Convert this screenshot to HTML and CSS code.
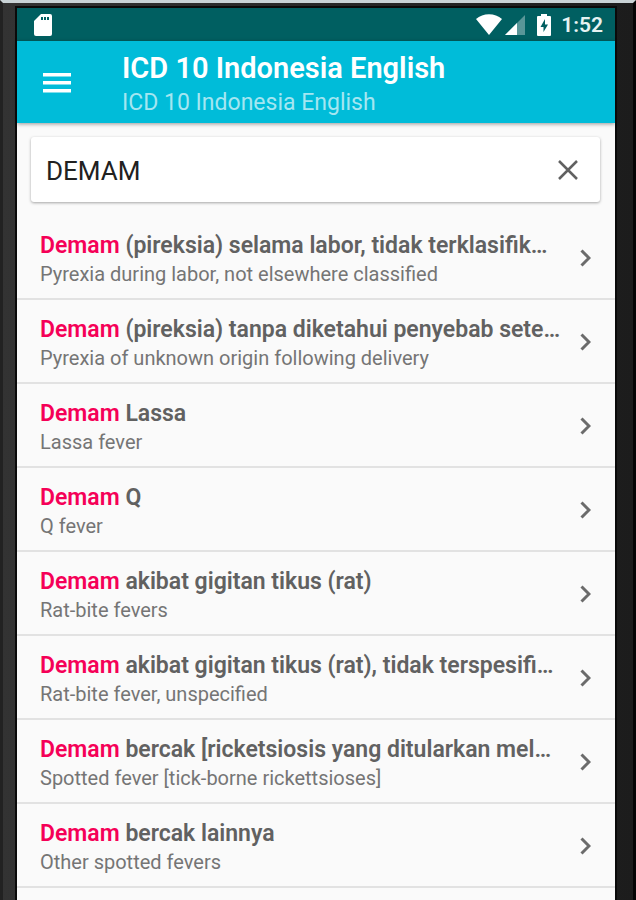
FILE: index.html
```html
<!DOCTYPE html>
<html lang="id">
<head>
    <meta charset="UTF-8">
    <meta name="viewport" content="width=device-width, initial-scale=1.0">
    <title>ICD 10 Indonesia English</title>
    <link rel="stylesheet" href="styles.css">
</head>
<body>

    <div class="phone">
        <div class="screen">
            <!-- Status bar -->
            <div class="status-bar">
                <svg class="sd-icon" viewBox="0 0 18 22" width="18" height="22">
                    <path fill="#fff" d="M7 0h9a2 2 0 0 1 2 2v18a2 2 0 0 1-2 2H2a2 2 0 0 1-2-2V7z"/>
                    <path fill="#005f61" d="M7 3h2v3H7zM10 3h2v3h-2zM13 3h2v3h-2z"/>
                </svg>
                <div class="status-icons">
                    <svg viewBox="0 0 26 21" width="26" height="21">
                        <path fill="#fff" d="M13 21 0 5C7-1.500 19-1.500 26 5z"/>
                    </svg>
                    <svg class="signal-icon" viewBox="0 0 20 20" width="20" height="20">
                        <path fill="#fff" fill-opacity=".35" d="M20 0v20H0z"/>
                        <path fill="#fff" d="M12 8v12H0z"/>
                    </svg>
                    <svg class="battery-icon" viewBox="0 0 14 22" width="14" height="22">
                        <path fill="#fff" d="M4 0h6v2h3a1 1 0 0 1 1 1v18a1 1 0 0 1-1 1H1a1 1 0 0 1-1-1V3a1 1 0 0 1 1-1h3z"/>
                        <path fill="#005f61" d="M8 5 3.500 13H6.500v5L11 10.500H8z"/>
                    </svg>
                    <span class="clock">1:52</span>
                </div>
            </div>

            <!-- App bar -->
            <header class="app-bar">
                <button class="menu-button" aria-label="Menu">
                    <svg viewBox="0 0 28 20" width="28" height="20">
                        <path fill="#fff" d="M0 0h28v3.500H0zM0 8h28v3.500H0zM0 16h28v3.500H0z"/>
                    </svg>
                </button>
                <div class="app-titles">
                    <h1>ICD 10 Indonesia English</h1>
                    <p>ICD 10 Indonesia English</p>
                </div>
            </header>

            <!-- Search -->
            <div class="search-box">
                <input type="text" id="searchInput" value="DEMAM" aria-label="Search">
                <button class="clear-button" aria-label="Clear">
                    <svg viewBox="0 0 20 20" width="20" height="20">
                        <path fill="none" stroke="#616161" stroke-width="2.500" d="M1 1l18 18M19 1 1 19"/>
                    </svg>
                </button>
            </div>

            <!-- Results -->
            <ul class="results">
                <li><a href="#">
                    <div class="text">
                        <h2><mark>Demam</mark> (pireksia) selama labor, tidak terklasifik…</h2>
                        <p>Pyrexia during labor, not elsewhere classified</p>
                    </div>
                    <svg class="chevron" viewBox="0 0 11 18" width="11" height="18"><path d="M1.500 1.500 9 9l-7.500 7.500"/></svg>
                </a></li>
                <li><a href="#">
                    <div class="text">
                        <h2><mark>Demam</mark> (pireksia) tanpa diketahui penyebab sete…</h2>
                        <p>Pyrexia of unknown origin following delivery</p>
                    </div>
                    <svg class="chevron" viewBox="0 0 11 18" width="11" height="18"><path d="M1.500 1.500 9 9l-7.500 7.500"/></svg>
                </a></li>
                <li><a href="#">
                    <div class="text">
                        <h2><mark>Demam</mark> Lassa</h2>
                        <p>Lassa fever</p>
                    </div>
                    <svg class="chevron" viewBox="0 0 11 18" width="11" height="18"><path d="M1.500 1.500 9 9l-7.500 7.500"/></svg>
                </a></li>
                <li><a href="#">
                    <div class="text">
                        <h2><mark>Demam</mark> Q</h2>
                        <p>Q fever</p>
                    </div>
                    <svg class="chevron" viewBox="0 0 11 18" width="11" height="18"><path d="M1.500 1.500 9 9l-7.500 7.500"/></svg>
                </a></li>
                <li><a href="#">
                    <div class="text">
                        <h2><mark>Demam</mark> akibat gigitan tikus (rat)</h2>
                        <p>Rat-bite fevers</p>
                    </div>
                    <svg class="chevron" viewBox="0 0 11 18" width="11" height="18"><path d="M1.500 1.500 9 9l-7.500 7.500"/></svg>
                </a></li>
                <li><a href="#">
                    <div class="text">
                        <h2><mark>Demam</mark> akibat gigitan tikus (rat), tidak terspesifi…</h2>
                        <p>Rat-bite fever, unspecified</p>
                    </div>
                    <svg class="chevron" viewBox="0 0 11 18" width="11" height="18"><path d="M1.500 1.500 9 9l-7.500 7.500"/></svg>
                </a></li>
                <li><a href="#">
                    <div class="text">
                        <h2><mark>Demam</mark> bercak [ricketsiosis yang ditularkan mel…</h2>
                        <p>Spotted fever [tick-borne rickettsioses]</p>
                    </div>
                    <svg class="chevron" viewBox="0 0 11 18" width="11" height="18"><path d="M1.500 1.500 9 9l-7.500 7.500"/></svg>
                </a></li>
                <li><a href="#">
                    <div class="text">
                        <h2><mark>Demam</mark> bercak lainnya</h2>
                        <p>Other spotted fevers</p>
                    </div>
                    <svg class="chevron" viewBox="0 0 11 18" width="11" height="18"><path d="M1.500 1.500 9 9l-7.500 7.500"/></svg>
                </a></li>
            </ul>
        </div>
    </div>

</body>
</html>
```

FILE: styles.css
```css
* {
    box-sizing: border-box;
}

body {
    font-family: Roboto, "Liberation Sans", sans-serif;
    margin: 0;
    background-color: #222;
}

h1, h2, p, ul {
    margin: 0;
    padding: 0;
}

button {
    background: none;
    border: none;
    padding: 0;
    cursor: pointer;
}

svg {
    display: block;
}

/* Phone frame around the screen */
.phone {
    display: flex;
    min-height: 100vh;
    padding: 5px 18px 0 14px;
    border-top: 3px solid #c9d3d6;
    border-left: 3px solid #222;
    border-right: 3px solid #050505;
    background: linear-gradient(to right, #333, #1c1c1c);
}

.screen {
    flex: 1;
    min-width: 0;
    background: #fafafa;
    box-shadow: 0 0 0 2px #0a0a0a;
}

.status-bar {
    display: flex;
    align-items: center;
    justify-content: space-between;
    height: 33px;
    padding: 0 12px 0 17px;
    background: #005f61;
}

.status-icons {
    display: flex;
    align-items: center;
}

.signal-icon {
    margin-left: 3px;
}

.battery-icon {
    margin-left: 12px;
}

.clock {
    margin-left: 10px;
    color: #e6f2f2;
    font-size: 21px;
    font-weight: 600;
    line-height: 24px;
}

.app-bar {
    display: flex;
    align-items: center;
    padding: 5px 26px 4px;
    background: #00bcd9;
    box-shadow: 0 1px 4px rgba(0, 0, 0, 0.4);
}

.app-titles {
    margin-left: 51px;
    padding-top: 3px;
    color: #fff;
}

.app-titles h1 {
    font-size: 29px;
    font-weight: 600;
    line-height: 38px;
}

.app-titles p {
    color: #a4e6f1;
    font-size: 23px;
    line-height: 32px;
}

/* Search box */
.search-box {
    display: flex;
    align-items: center;
    margin: 14px 15px 14px 14px;
    padding: 0 22px 0 15px;
    background: #fff;
    border-radius: 3px;
    box-shadow: 0 1px 3px rgba(0, 0, 0, 0.35);
}

.search-box input {
    flex: 1;
    min-width: 0;
    height: 65px;
    padding: 2px 0 0;
    border: none;
    outline: none;
    background: none;
    color: #212121;
    font-family: inherit;
    font-size: 26px;
}

/* Result list */
.results {
    list-style: none;
}

.results a {
    display: flex;
    align-items: center;
    justify-content: space-between;
    padding: 15px 24px 10px 23px;
    border-bottom: 2px solid #e2e2e2;
    color: #757575;
    text-decoration: none;
}

.results .text {
    flex: 1;
    min-width: 0;
    margin-right: 8px;
}

.results h2 {
    overflow: hidden;
    color: #616161;
    font-size: 23px;
    font-weight: 600;
    line-height: 29px;
    text-overflow: ellipsis;
    white-space: nowrap;
}

.results mark {
    background: none;
    color: #f50057;
}

.results p {
    font-size: 20px;
    line-height: 28px;
}

.chevron {
    margin-bottom: 4px;
    fill: none;
    stroke: #6b6b6b;
    stroke-width: 3;
}
```
